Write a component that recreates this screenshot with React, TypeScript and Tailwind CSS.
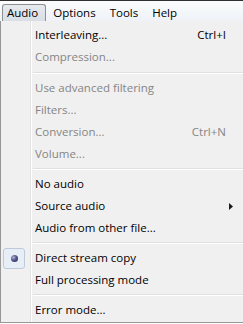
import type { ReactNode } from "react";

type Item = {
  label: string;
  disabled?: boolean;
  shortcut?: string;
  submenu?: boolean;
  checked?: boolean;
};

type Entry = Item | { sep: number };

const entries: Entry[] = [
  { label: "Interleaving...", shortcut: "Ctrl+I" },
  { label: "Compression...", disabled: true },
  { sep: 9 },
  { label: "Use advanced filtering", disabled: true },
  { label: "Filters...", disabled: true },
  { label: "Conversion...", disabled: true, shortcut: "Ctrl+N" },
  { label: "Volume...", disabled: true },
  { sep: 8 },
  { label: "No audio" },
  { label: "Source audio", submenu: true },
  { label: "Audio from other file..." },
  { sep: 8 },
  { label: "Direct stream copy", checked: true },
  { label: "Full processing mode" },
  { sep: 8 },
  { label: "Error mode..." },
];

function RadioMark() {
  return (
    <div className="ml-[2px] flex h-[21px] w-[22px] items-center justify-center rounded-[3px] border border-[#bccadb] bg-[#e8eef5]">
      <div className="h-[7px] w-[7px] rounded-full bg-[radial-gradient(circle_at_35%_35%,#b4b4dc_0%,#54548c_45%,#252550_100%)]" />
    </div>
  );
}

function MenuRow({ item }: { item: Item }) {
  const color = item.disabled ? "text-[#858585]" : "text-black";
  return (
    <div className={`flex h-[22px] items-center ${color}`}>
      <div className="flex w-[34px] shrink-0 items-center">{item.checked ? <RadioMark /> : null}</div>
      <span className="flex-1 whitespace-nowrap">{item.label}</span>
      {item.shortcut && <span className="mr-[17px] whitespace-nowrap">{item.shortcut}</span>}
      {item.submenu && (
        <svg className="mr-[10px]" width="4" height="7" viewBox="0 0 4 7">
          <path d="M0 0 L4 3.5 L0 7 Z" fill="#1a1a1a" />
        </svg>
      )}
    </div>
  );
}

function Separator({ h }: { h: number }) {
  return (
    <div className={h === 9 ? "h-[9px] pt-[4px]" : "h-[8px] pt-[3px]"}>
      <div className="ml-[32px] h-px bg-[#e0e0e0]" />
      <div className="ml-[32px] h-px bg-white" />
    </div>
  );
}

function BarItem({ children, active }: { children: ReactNode; active?: boolean }) {
  if (active) {
    return (
      <div className="ml-[2px] flex h-[17px] items-center rounded-t-[3px] border border-b-0 border-[#8e8f8f] bg-[linear-gradient(to_bottom,#e6e9ee,#d9dee5)] pl-[4px] pr-[7px]">
        {children}
      </div>
    );
  }
  return <div className="flex h-[17px] items-center px-[7px]">{children}</div>;
}

export default function App() {
  return (
    <div className="h-[324px] w-[243px] overflow-hidden bg-white font-['Open_Sans',sans-serif] text-[11.5px] leading-none">
      <div className="h-px bg-[#2e2e2e]" />
      <div className="flex h-[20px] items-end bg-[linear-gradient(to_bottom,#fbfcfd,#eef2f7)] pb-0 text-black">
        <BarItem active>Audio</BarItem>
        <BarItem>Options</BarItem>
        <BarItem>Tools</BarItem>
        <BarItem>Help</BarItem>
      </div>
      <div className="border-b border-l border-[#979797] bg-[#f0f0f0] bg-[linear-gradient(to_right,transparent_29px,#e2e3e3_29px,#e2e3e3_30px,#ffffff_30px,#ffffff_31px,transparent_31px)] pb-px pt-[3px]">
        {entries.map((e, i) =>
          "sep" in e ? <Separator key={i} h={e.sep} /> : <MenuRow key={i} item={e} />
        )}
      </div>
    </div>
  );
}
